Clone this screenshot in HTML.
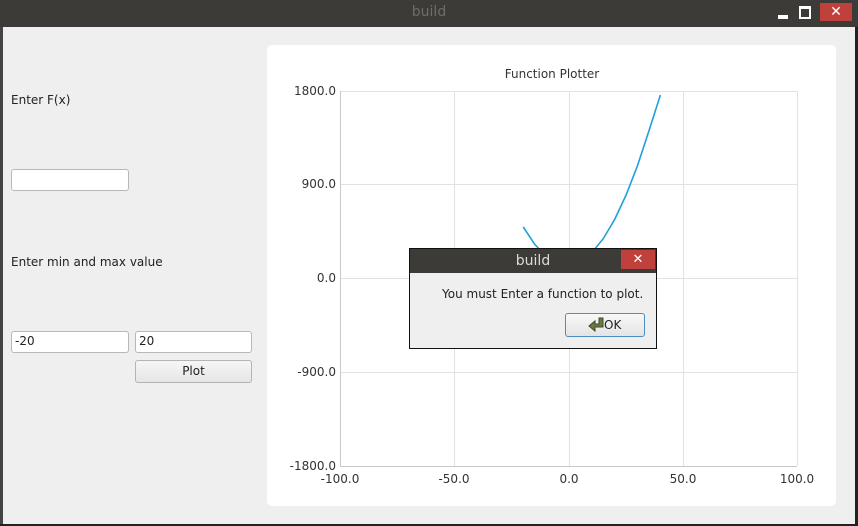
<!DOCTYPE html>
<html><head><style>
body{margin:0;width:858px;height:526px;overflow:hidden;background:#fff;font-family:"DejaVu Sans","Liberation Sans",sans-serif;font-size:12px;color:#222;position:relative}
.a{position:absolute}
.inp{position:absolute;background:#fff;border:1px solid #b8b8b8;border-radius:3px;box-sizing:border-box;height:22px;padding:2px 3px;font-size:12px}
</style></head><body>
<div class="a" style="left:0;top:0;width:858px;height:526px;background:#efefef"></div>
<div class="a" style="left:0;top:0;width:3px;height:526px;background:#444"></div>
<div class="a" style="left:0;top:524px;width:858px;height:2px;background:#222"></div>
<div class="a" style="left:855px;top:27px;width:3px;height:499px;background:#222"></div>
<div class="a" style="left:0;top:0;width:858px;height:27px;background:#3c3b37"></div>
<div class="a" style="left:0;top:4px;width:858px;text-align:center;color:#6e6d69;font-size:14px">build</div>
<div class="a" style="left:778px;top:15px;width:10px;height:4px;background:#fff"></div>
<div class="a" style="left:799px;top:6px;width:12px;height:13px;border:2px solid #fff;border-top-width:3px;box-sizing:border-box"></div>
<div class="a" style="left:820px;top:3px;width:32px;height:18px;background:#c0413b;color:#fff;text-align:center;font-size:14px;font-weight:bold;line-height:18px">✕</div>

<div class="a" style="left:11px;top:93px">Enter F(x)</div>
<div class="inp" style="left:11px;top:169px;width:118px"></div>
<div class="a" style="left:11px;top:255px">Enter min and max value</div>
<div class="inp" style="left:11px;top:331px;width:118px">-20</div>
<div class="inp" style="left:135px;top:331px;width:117px">20</div>
<div class="a" style="left:135px;top:360px;width:117px;height:23px;box-sizing:border-box;border:1px solid #b4b4b4;border-radius:3px;background:linear-gradient(#f6f6f6,#e6e6e6);text-align:center;line-height:21px">Plot</div>

<div class="a" style="left:267px;top:45px;width:569px;height:461px;background:#fff;border-radius:5px"></div>
<svg class="a" style="left:0;top:0" width="858" height="526">
<g stroke="#e2e2e2" stroke-width="1">
<line x1="454.5" y1="91" x2="454.5" y2="466"/><line x1="569.5" y1="91" x2="569.5" y2="466"/><line x1="683.5" y1="91" x2="683.5" y2="466"/><line x1="797.5" y1="91" x2="797.5" y2="466"/>
<line x1="340" y1="91.5" x2="797" y2="91.5"/><line x1="340" y1="184.5" x2="797" y2="184.5"/><line x1="340" y1="278.5" x2="797" y2="278.5"/><line x1="340" y1="372.5" x2="797" y2="372.5"/>
</g>
<g stroke="#c8c8c8"><line x1="340.5" y1="91" x2="340.5" y2="466"/><line x1="340" y1="466.5" x2="797" y2="466.5"/></g>
<polyline fill="none" stroke="#209fdf" stroke-width="1.6" points="523.3,227 534.7,244.3 546.2,256.4 557.6,263.2 569,264.9 580.4,261.3 591.9,252.6 603.3,238.6 614.7,219.4 626.1,195 637.6,165.4 649,130.6 660.4,95"/>
<g font-family="DejaVu Sans, sans-serif" font-size="12" fill="#333">
<text x="552" y="78" text-anchor="middle" font-size="12">Function Plotter</text>
<text x="336" y="95" text-anchor="end">1800.0</text>
<text x="336" y="188" text-anchor="end">900.0</text>
<text x="336" y="282" text-anchor="end">0.0</text>
<text x="336" y="376" text-anchor="end">-900.0</text>
<text x="336" y="470" text-anchor="end">-1800.0</text>
<text x="340" y="483" text-anchor="middle">-100.0</text>
<text x="454" y="483" text-anchor="middle">-50.0</text>
<text x="569" y="483" text-anchor="middle">0.0</text>
<text x="683" y="483" text-anchor="middle">50.0</text>
<text x="797" y="483" text-anchor="middle">100.0</text>
</g>
</svg>

<div class="a" style="left:409px;top:248px;width:248px;height:101px;background:#efefef;border:1px solid #111;box-sizing:border-box"></div>
<div class="a" style="left:410px;top:249px;width:246px;height:24px;background:#3c3b37;color:#dcdcdc;text-align:center;font-size:14px;line-height:24px">build</div>
<div class="a" style="left:621px;top:250px;width:34px;height:19px;background:#c0413b;color:#fff;text-align:center;font-size:13px;font-weight:bold;line-height:19px">✕</div>
<div class="a" style="left:442px;top:287px">You must Enter a function to plot.</div>
<div class="a" style="left:565px;top:313px;width:80px;height:24px;box-sizing:border-box;border:1px solid #4a8ec4;border-radius:3px;background:linear-gradient(#f8f8f8,#e4e4e4)"></div>
<svg class="a" style="left:587px;top:316px" width="18" height="18"><path d="M12 2 L16 2 L16 11 L8 11 L8 15 L2 10 L8 5 L8 8 L12 8 Z" fill="#6b7a45" stroke="#3d4a25" stroke-width="1"/></svg>
<div class="a" style="left:604px;top:318px">OK</div>
</body></html>
